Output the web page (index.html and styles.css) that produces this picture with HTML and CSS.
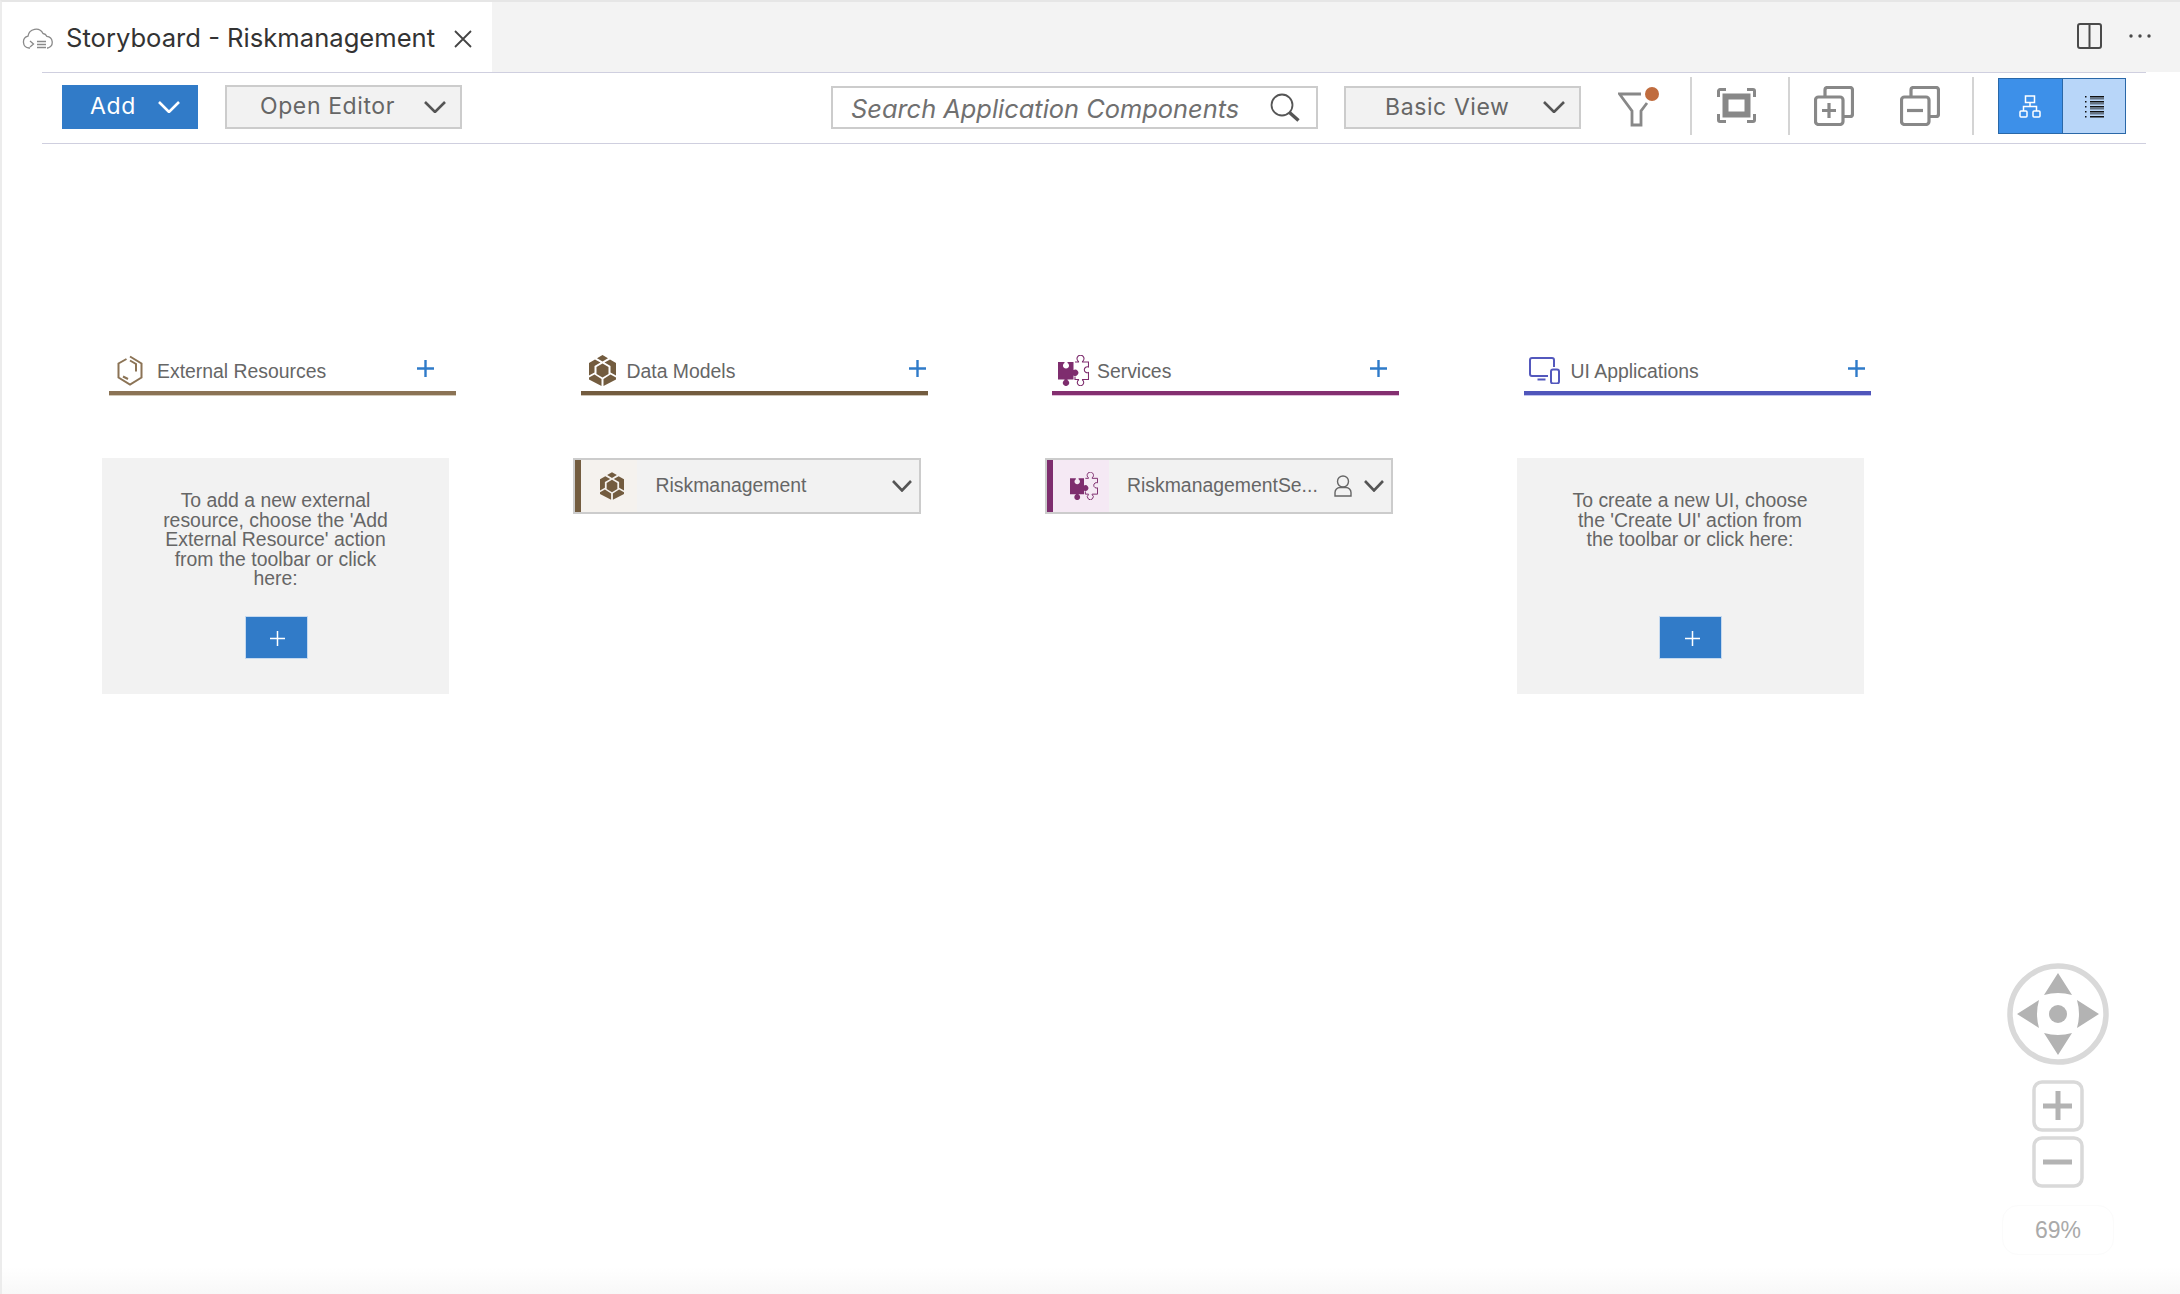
FILE: index.html
```html
<!DOCTYPE html>
<html lang="en">
<head>
<meta charset="utf-8">
<title>Storyboard - Riskmanagement</title>
<link rel="stylesheet" href="styles.css">
</head>
<body>
<div class="app">
  <header class="tabbar">
    <div class="tab">
      <svg class="i-cloud" viewBox="0 0 32 22" fill="none" stroke="#8a8a8a" stroke-width="1.3"><path d="M8 20H7a6 6 0 0 1-1-11.8A8 8 0 0 1 21 5.5a4.6 4.6 0 0 1 3.8 2.8A6 6 0 0 1 26 20h-1"/><path d="M8 13l3.5 3L8 19"/><path d="M15 13.5h9M15 16.5h9M15 19.5h9"/></svg>
      <span class="tab-title">Storyboard - Riskmanagement</span>
      <svg class="i-close" viewBox="0 0 18 18" fill="none" stroke="#444" stroke-width="1.8"><path d="M1 1l16 16M17 1L1 17"/></svg>
    </div>
    <div class="tab-actions">
      <svg class="i-split" viewBox="0 0 25 26" fill="none" stroke="#4a4a4a" stroke-width="2"><rect x="1" y="1" width="23" height="24" rx="2"/><path d="M12.5 1v24"/></svg>
      <svg class="i-dots" viewBox="0 0 22 4" fill="#4a4a4a"><circle cx="2" cy="2" r="1.7"/><circle cx="11" cy="2" r="1.7"/><circle cx="20" cy="2" r="1.7"/></svg>
    </div>
  </header>

  <div class="toolbar">
    <button class="drop drop-add"><span class="drop-label">Add</span><svg class="chev" viewBox="0 0 22 12" fill="none" stroke="#fff" stroke-width="2.6"><path d="M1 1l10 10L21 1"/></svg></button>
    <button class="drop drop-open"><span class="drop-label">Open Editor</span><svg class="chev" viewBox="0 0 22 12" fill="none" stroke="#555" stroke-width="2.6"><path d="M1 1l10 10L21 1"/></svg></button>
    <div class="search">
      <span class="search-text">Search Application Components</span>
      <svg class="i-search" viewBox="0 0 30 29" fill="none" stroke="#555"><circle cx="12" cy="12" r="10.5" stroke-width="1.8"/><path d="M19.5 19.5L28.5 27.5" stroke-width="3.4"/></svg>
    </div>
    <button class="drop drop-view"><span>Basic View</span><svg class="chev" viewBox="0 0 22 12" fill="none" stroke="#555" stroke-width="2.6"><path d="M1 1l10 10L21 1"/></svg></button>
    <svg class="i-filter" viewBox="0 0 41 40" fill="none"><path d="M23 7H1.500L14 24V38H23V24L29 16" stroke="#888" stroke-width="2.800"/><circle cx="34" cy="7" r="7" fill="#c06c3e"/></svg>
    <span class="sep"></span>
    <svg class="i-fit" viewBox="0 0 39 35" fill="none" stroke="#888"><path d="M1.500 9V3a1.500 1.500 0 0 1 1.500-1.500h6M30 1.500h6A1.500 1.500 0 0 1 37.500 3v6M1.500 26v6A1.500 1.500 0 0 0 3 33.500h6M30 33.500h6a1.500 1.500 0 0 0 1.500-1.500v-6" stroke-width="3"/><rect x="8.500" y="8.500" width="22" height="18" stroke-width="6"/></svg>
    <span class="sep"></span>
    <svg class="i-stack i-stack-plus" viewBox="0 0 40 40" fill="none" stroke="#888" stroke-width="3.200"><path d="M11 11V4a2.500 2.500 0 0 1 2.500-2.500h22A2.500 2.500 0 0 1 38.500 4v24a2.500 2.500 0 0 1-2.500 2.500h-7"/><rect x="1.500" y="11" width="27.500" height="27.500" rx="3"/><path d="M15 17v15M8 24.500h14"/></svg>
    <svg class="i-stack i-stack-minus" viewBox="0 0 40 40" fill="none" stroke="#888" stroke-width="3.200"><path d="M11 11V4a2.500 2.500 0 0 1 2.500-2.500h22A2.500 2.500 0 0 1 38.500 4v24a2.500 2.500 0 0 1-2.500 2.500h-7"/><rect x="1.500" y="11" width="27.500" height="27.500" rx="3"/><path d="M7 24.500h16"/></svg>
    <span class="sep"></span>
    <div class="toggle">
      <span class="toggle-on"><svg class="i-tree" viewBox="0 0 22 23" fill="none" stroke="#fff" stroke-width="1.500"><rect x="6.500" y="1" width="9" height="6.500"/><path d="M11 7.500v4M4.500 16v-4.500h13V16"/><rect x="1" y="16" width="7" height="6" rx="1"/><rect x="14" y="16" width="7" height="6" rx="1"/></svg></span>
      <span class="toggle-off"><svg class="i-list" viewBox="0 0 19 23" fill="#111"><path d="M5 1h14v1.500H5zM5 6h14v1.500H5zM5 11h14v1.500H5zM5 16h14v1.500H5zM5 21h14v1.500H5zM5 3.500h14v.8H5zM5 8.500h14v.8H5zM5 13.500h14v.8H5zM5 18.500h14v.8H5zM0 1h1.500v1.500H0zM0 6h1.500v1.500H0zM0 11h1.500v1.500H0zM0 16h1.500v1.500H0zM0 21h1.500v1.500H0z"/></svg></span>
    </div>
  </div>

  <main class="board">
    <section class="col col-ext">
      <div class="col-head">
        <svg class="i-hex" viewBox="0 0 26 31" fill="none" stroke="#8b7355" stroke-width="2"><path d="M9.500 4L1.500 8.500V22.500L13 29.500L24.500 22.500V8.500L13 1.500"/><path d="M13 5.500L19 9V16.500"/><path d="M6 21.500L11 24"/></svg>
        <span class="col-title">External Resources</span>
        <svg class="i-plus" viewBox="0 0 17 17" fill="none" stroke="#2f7bc9" stroke-width="2.400"><path d="M8.500 0v17M0 8.500h17"/></svg>
      </div>
      <div class="card">
        <p class="card-text">To add a new external resource, choose the 'Add External Resource' action from the toolbar or click here:</p>
        <button class="add-btn"><svg class="i-plus-s" viewBox="0 0 15 15" fill="none" stroke="#fff" stroke-width="1.500"><path d="M7.500 0v15M0 7.500h15"/></svg></button>
      </div>
    </section>

    <section class="col col-data">
      <div class="col-head">
        <svg class="i-cube" viewBox="0 0 27 31" fill="#735c3f"><path d="M13.500 0L19 3.200L13.500 6.400L8 3.200zM13.500 8.500L19.500 12V19L13.500 22.500L7.500 19V12zM0 8L6 4.600L11.500 7.500L5.500 11V17.500L0 20.500zM27 8L21 4.600L15.500 7.500L21.500 11V17.500L27 20.500zM0 22.500L5.500 19.500L12.500 24V31L0 24.500zM27 22.500L21.500 19.500L14.500 24V31L27 24.500z"/></svg>
        <span class="col-title">Data Models</span>
        <svg class="i-plus" viewBox="0 0 17 17" fill="none" stroke="#2f7bc9" stroke-width="2.400"><path d="M8.500 0v17M0 8.500h17"/></svg>
      </div>
      <div class="item">
        <span class="item-icon"><svg class="i-cube-s" viewBox="0 0 27 31" fill="#735c3f"><path d="M13.500 0L19 3.200L13.500 6.400L8 3.200zM13.500 8.500L19.500 12V19L13.500 22.500L7.500 19V12zM0 8L6 4.600L11.500 7.500L5.500 11V17.500L0 20.500zM27 8L21 4.600L15.500 7.500L21.500 11V17.500L27 20.500zM0 22.500L5.500 19.500L12.500 24V31L0 24.500zM27 22.500L21.500 19.500L14.500 24V31L27 24.500z"/></svg></span>
        <span class="item-text">Riskmanagement</span>
        <svg class="chev-item" viewBox="0 0 20 12" fill="none" stroke="#555" stroke-width="2.600"><path d="M1 1l9 9.500L19 1"/></svg>
      </div>
    </section>

    <section class="col col-svc">
      <div class="col-head">
        <svg class="i-puzzle" viewBox="0 0 31 31"><path fill="#7e2d6e" d="M0 7H6.500V8A3 3 0 1 0 9.500 8V7H15.500V15A3.200 3.200 0 1 1 15.500 20.500V24.500H9.500V25A3.200 3.200 0 1 1 6.500 25V24.500H0z"/><path fill="none" stroke="#7e2d6e" stroke-width="1.100" d="M17 7H20.500V6.500A3.500 3.500 0 1 1 24.500 6.500V7H30.500V12A3 3 0 1 0 30.500 17.500V24.500H24.500V25A3.200 3.200 0 1 1 20.500 25V24.500H17V21.500"/></svg>
        <span class="col-title">Services</span>
        <svg class="i-plus" viewBox="0 0 17 17" fill="none" stroke="#2f7bc9" stroke-width="2.400"><path d="M8.500 0v17M0 8.500h17"/></svg>
      </div>
      <div class="item">
        <span class="item-icon"><svg class="i-puzzle-s" viewBox="0 0 31 31"><path fill="#7e2d6e" d="M0 7H6.500V8A3 3 0 1 0 9.500 8V7H15.500V15A3.200 3.200 0 1 1 15.500 20.500V24.500H9.500V25A3.200 3.200 0 1 1 6.500 25V24.500H0z"/><path fill="none" stroke="#7e2d6e" stroke-width="1.100" d="M17 7H20.500V6.500A3.500 3.500 0 1 1 24.500 6.500V7H30.500V12A3 3 0 1 0 30.500 17.500V24.500H24.500V25A3.200 3.200 0 1 1 20.500 25V24.500H17V21.500"/></svg></span>
        <span class="item-text">RiskmanagementSe...</span>
        <svg class="i-user" viewBox="0 0 18 22" fill="none" stroke="#666" stroke-width="1.400"><circle cx="9" cy="6.500" r="5.500"/><path d="M1 21v-3.500A5 5 0 0 1 6 12.500h6a5 5 0 0 1 5 5V21z"/></svg>
        <svg class="chev-item" viewBox="0 0 20 12" fill="none" stroke="#555" stroke-width="2.600"><path d="M1 1l9 9.500L19 1"/></svg>
      </div>
    </section>

    <section class="col col-ui">
      <div class="col-head">
        <svg class="i-device" viewBox="0 0 31 27" fill="none" stroke="#5358bd" stroke-width="2"><path d="M19 19H3a2 2 0 0 1-2-2V3a2 2 0 0 1 2-2h20a2 2 0 0 1 2 2v7"/><path d="M8.500 22.500h8"/><rect x="22" y="12.500" width="8" height="14" rx="2"/></svg>
        <span class="col-title">UI Applications</span>
        <svg class="i-plus" viewBox="0 0 17 17" fill="none" stroke="#2f7bc9" stroke-width="2.400"><path d="M8.500 0v17M0 8.500h17"/></svg>
      </div>
      <div class="card">
        <p class="card-text">To create a new UI, choose the 'Create UI' action from the toolbar or click here:</p>
        <button class="add-btn"><svg class="i-plus-s" viewBox="0 0 15 15" fill="none" stroke="#fff" stroke-width="1.500"><path d="M7.500 0v15M0 7.500h15"/></svg></button>
      </div>
    </section>

    <aside class="nav">
      <svg class="i-pad" viewBox="0 0 102 102"><circle cx="51" cy="51" r="48" fill="none" stroke="#d9d9d9" stroke-width="5.500"/><circle cx="51" cy="51" r="9" fill="#b3b3b3"/><path fill="#b3b3b3" d="M51 10L65 32Q51 28 37 32zM51 92L65 70Q51 74 37 70zM10 51L32 37Q28 51 32 65zM92 51L70 37Q74 51 70 65z"/></svg>
      <svg class="i-zoom i-zoom-in" viewBox="0 0 52 52" fill="none"><rect x="2" y="2" width="48" height="48" rx="8" stroke="#d9d9d9" stroke-width="3.500"/><path d="M26 11v29M11 26h29" stroke="#b3b3b3" stroke-width="5"/></svg>
      <svg class="i-zoom i-zoom-out" viewBox="0 0 52 52" fill="none"><rect x="2" y="2" width="48" height="48" rx="8" stroke="#d9d9d9" stroke-width="3.500"/><path d="M11 26h29" stroke="#b3b3b3" stroke-width="5"/></svg>
      <span class="zoom-level">69%</span>
    </aside>
  </main>
</div>
</body>
</html>
```
FILE: styles.css
```css
* { box-sizing: border-box; }
html, body { margin: 0; height: 100%; background: #fff; }
body { overflow: hidden; }
.app {
  height: 1294px;
  display: flex;
  flex-direction: column;
  border-top: 2px solid #e6e6e6;
  border-left: 2px solid #ececec;
  font-family: "Liberation Sans", Arial, sans-serif;
  color: #666;
  background: linear-gradient(to bottom, #fff 1265px, #f8f8f8 1292px);
}

/* tab bar */
.tabbar {
  height: 70px;
  flex: none;
  display: flex;
  justify-content: space-between;
  background: #f3f3f3;
}
.tab {
  width: 490px;
  display: flex;
  align-items: center;
  background: #fff;
  padding: 0 0 0 20px;
  margin-bottom: -1px;
  position: relative;
}
.i-cloud { width: 32px; height: 22px; margin-right: 12px; margin-top: 3px; }
.tab-title {
  font-family: Inter, "Noto Sans", sans-serif;
  font-size: 25.600px;
  color: #333;
  white-space: nowrap;
}
.i-close { width: 18px; height: 18px; margin-left: 19px; margin-top: 2px; }
.tab-actions { display: flex; align-items: center; padding: 0 29px 2px 0; }
.i-split { width: 25px; height: 26px; }
.i-dots { width: 22px; height: 4px; margin-left: 27px; }

/* toolbar */
.toolbar {
  height: 72px;
  flex: none;
  margin: 0 34px 0 40px;
  padding: 0 20px 2px 20px;
  border-top: 1px solid #cfcfdf;
  border-bottom: 1px solid #cfcfdf;
  display: flex;
  align-items: center;
  background: #fff;
  position: relative;
}
.drop {
  height: 44px;
  display: flex;
  align-items: center;
  justify-content: space-between;
  font-family: Inter, "Noto Sans", sans-serif;
  font-size: 23px;
  letter-spacing: 0.600px;
  cursor: default;
  border: 2px solid #ccc;
  background: #f2f2f2;
  color: #666;
}
.drop-label { margin-top: -2px; }
.chev { width: 22px; height: 12px; }
.drop-add { width: 136px; padding: 0 18px 0 28px; background: #317bc8; border: 0; color: #fff; }
.drop-open { width: 237px; margin-left: 27px; padding: 0 14px 0 33px; }
.drop-view { width: 237px; margin-left: 26px; padding: 0 14px 0 39px; height: 43px; }
.search {
  width: 487px;
  height: 43px;
  margin-left: auto;
  border: 2px solid #ccc;
  display: flex;
  align-items: center;
  justify-content: space-between;
  padding: 0 16px 0 18px;
}
.search-text {
  font-family: Inter, "Noto Sans", sans-serif;
  font-style: italic;
  font-size: 25.400px;
  margin-top: 2px;
  color: #707070;
  white-space: nowrap;
}
.i-search { width: 30px; height: 29px; }
.i-filter { width: 41px; height: 40px; margin-left: 37px; margin-right: -1px; }
.sep { width: 2px; height: 58px; background: #d4d4d4; margin: 0 0 2px 32px; flex: none; }
.i-fit { width: 39px; height: 35px; margin: 0 0 3px 25px; }
.i-stack { width: 40px; height: 40px; margin-bottom: 2px; }
.i-stack-plus { margin-left: 24px; }
.i-stack-minus { margin-left: 46px; }
.toggle {
  width: 128px;
  height: 56px;
  margin: 0 0 2px 24px;
  display: flex;
  border: 1px solid #2a68a8;
}
.toggle-on, .toggle-off { display: flex; align-items: center; justify-content: center; }
.toggle-on { width: 64px; background: #3d90e9; border-right: 1px solid #2a68a8; }
.toggle-off { flex: 1; background: #b8d6f9; }
.i-tree { width: 22px; height: 23px; margin-right: 1px; }
.i-list { width: 19px; height: 23px; }

/* board */
.board {
  flex: 1;
  position: relative;
  display: grid;
  grid-template-columns: repeat(4, 347px);
  column-gap: 124.500px;
  align-content: start;
  padding: 206px 0 0 107px;
}
.col-head {
  height: 45px;
  display: flex;
  align-items: center;
  border-bottom: 4px solid;
  position: relative;
}
.col-title { font-size: 19.400px; color: #666; white-space: nowrap; margin-top: 2px; }
.i-plus { width: 17px; height: 17px; margin-left: auto; margin-top: -4px; }
.col-ext .col-head { border-color: #8b7355; box-shadow: 0 1px 0 #d3c9b8; padding: 0 22px 0 8px; }
.col-data .col-head { border-color: #735c3f; box-shadow: 0 1px 0 #cdc3b4; padding: 0 2px 0 8px; }
.col-svc .col-head { border-color: #842f70; box-shadow: 0 1px 0 #e0bcd8; padding: 0 12px 0 6px; }
.col-ui .col-head { border-color: #5056bb; box-shadow: 0 1px 0 #c0c2ec; padding: 0 6px 0 5px; }
.i-hex { width: 26px; height: 31px; margin-right: 14px; }
.i-cube { width: 27px; height: 31px; margin-right: 11px; }
.i-puzzle { width: 31px; height: 31px; margin-right: 8px; }
.i-device { width: 31px; height: 27px; margin-right: 11px; }

.card {
  width: 347px;
  height: 236px;
  margin: 63px 0 0 -7px;
  background: #f2f2f2;
  position: relative;
  display: flex;
  flex-direction: column;
  align-items: center;
}
.card-text {
  width: 245px;
  margin: 33px 0 0;
  font-size: 19.400px;
  line-height: 19.500px;
  text-align: center;
  color: #666;
}
.add-btn {
  position: absolute;
  left: 142.500px;
  top: 158px;
  width: 63px;
  height: 43px;
  padding: 0;
  display: flex;
  align-items: center;
  justify-content: center;
  background: #317bc8;
  border: 1px solid #c5d9ef;
}
.i-plus-s { width: 15px; height: 15px; margin: 2px 0 0 3px; }

.item {
  width: 348px;
  height: 56px;
  margin: 63px 0 0 -7.500px;
  background: #f2f2f2;
  border: 2px solid #ccc;
  display: flex;
  align-items: center;
  padding-right: 7px;
}
.item-icon {
  width: 62px;
  height: 100%;
  display: flex;
  align-items: center;
  justify-content: center;
  flex: none;
}
.col-data .item-icon { background: #f5f2ee; border-left: 6px solid #735c3f; }
.col-svc .item-icon { background: #f5e9f4; border-left: 6px solid #7e2d6e; }
.i-cube-s { width: 24px; height: 28px; margin-left: 6px; }
.i-puzzle-s { width: 28px; height: 28px; margin-left: 6px; }
.item-text { margin: -1px 0 0 18.500px; font-size: 19.400px; color: #666; white-space: nowrap; }
.i-user { width: 18px; height: 22px; margin-left: auto; margin-right: 12px; }
.chev-item { width: 20px; height: 12px; flex: none; margin-left: auto; }
.i-user + .chev-item { margin-left: 0; }

/* navigation overlay */
.nav {
  position: absolute;
  left: 1998px;
  top: 0;
  width: 116px;
  padding-top: 819px;
  display: flex;
  flex-direction: column;
  align-items: center;
}
.i-pad { width: 102px; height: 102px; }
.i-zoom { width: 52px; height: 52px; }
.i-zoom-in { margin-top: 15px; }
.i-zoom-out { margin-top: 4px; }
.zoom-level {
  margin-top: 17px;
  width: 112px;
  height: 50px;
  border: 1px solid #fbfbfb;
  border-radius: 16px;
  line-height: 48px;
  text-align: center;
  font-size: 23px;
  color: #aaa;
}
```
